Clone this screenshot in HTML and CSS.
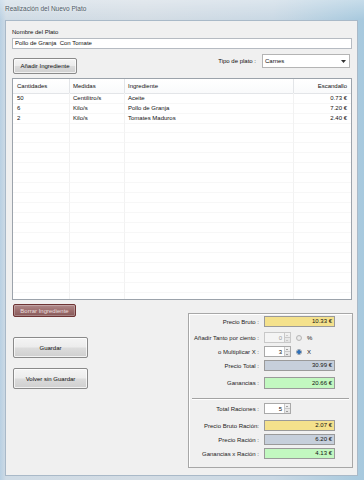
FILE: index.html
```html
<!DOCTYPE html>
<html lang="es">
<head>
  <meta charset="UTF-8">
  <title>Realización del Nuevo Plato</title>
  <link rel="stylesheet" href="styles.css">
</head>
<body>
  <div class="window">
    <div class="titlebar">Realización del Nuevo Plato</div>

    <div class="client">
      <div class="lbl">Nombre del Plato</div>
      <div class="textbox">Pollo de Granja&nbsp; Con Tomate</div>

      <div class="toolbar">
        <button class="btn btn-add">Añadir Ingrediente</button>
        <div class="tipo">
          <span>Tipo de plato :</span>
          <div class="combo">
            <span>Carnes</span>
            <svg width="5" height="3" viewBox="0 0 5 3"><path d="M0 0H5L2.5 3Z" fill="#333"/></svg>
          </div>
        </div>
      </div>

      <div class="list">
        <div class="row head">
          <div>Cantidades</div>
          <div>Medidas</div>
          <div>Ingrediente</div>
          <div class="num">Escandallo</div>
        </div>
        <div class="body">
          <div class="row"><div>50</div><div>Centilitro/s</div><div>Aceite</div><div class="num">0.73 €</div></div>
          <div class="row"><div>6</div><div>Kilo/s</div><div>Pollo de Granja</div><div class="num">7.20 €</div></div>
          <div class="row"><div>2</div><div>Kilo/s</div><div>Tomates Maduros</div><div class="num">2.40 €</div></div>
          <div class="row"><div></div><div></div><div></div><div></div></div>
          <div class="row"><div></div><div></div><div></div><div></div></div>
          <div class="row"><div></div><div></div><div></div><div></div></div>
          <div class="row"><div></div><div></div><div></div><div></div></div>
          <div class="row"><div></div><div></div><div></div><div></div></div>
          <div class="row"><div></div><div></div><div></div><div></div></div>
          <div class="row"><div></div><div></div><div></div><div></div></div>
          <div class="row"><div></div><div></div><div></div><div></div></div>
          <div class="row"><div></div><div></div><div></div><div></div></div>
          <div class="row"><div></div><div></div><div></div><div></div></div>
          <div class="row"><div></div><div></div><div></div><div></div></div>
          <div class="row"><div></div><div></div><div></div><div></div></div>
          <div class="row"><div></div><div></div><div></div><div></div></div>
          <div class="row"><div></div><div></div><div></div><div></div></div>
          <div class="row"><div></div><div></div><div></div><div></div></div>
          <div class="row"><div></div><div></div><div></div><div></div></div>
          <div class="row"><div></div><div></div><div></div><div></div></div>
          <div class="row"><div></div><div></div><div></div><div></div></div>
        </div>
      </div>

      <div class="bottom">
        <div class="actions">
          <button class="btn btn-del">Borrar Ingrediente</button>
          <button class="btn btn-big btn-save">Guardar</button>
          <button class="btn btn-big btn-back">Volver sin Guardar</button>
        </div>

        <div class="group">
          <div class="field f1">
            <span class="flabel">Precio Bruto :</span>
            <div class="value yellow">10.33 €</div>
          </div>
          <div class="field f2">
            <span class="flabel">Añadir Tanto por ciento :</span>
            <div class="spin disabled"><span>0</span><i class="arrows"></i></div>
            <span class="radio"></span>
            <span class="unit">%</span>
          </div>
          <div class="field f3">
            <span class="flabel">o Multiplicar X :</span>
            <div class="spin"><span>3</span><i class="arrows"></i></div>
            <span class="radio checked"></span>
            <span class="unit">X</span>
          </div>
          <div class="field f4">
            <span class="flabel">Precio Total :</span>
            <div class="value slate">30.99 €</div>
          </div>
          <div class="field f5">
            <span class="flabel">Ganancias :</span>
            <div class="value green">20.66 €</div>
          </div>

          <div class="sep"></div>

          <div class="field f6">
            <span class="flabel">Total Raciones :</span>
            <div class="spin"><span>5</span><i class="arrows"></i></div>
          </div>
          <div class="field f7">
            <span class="flabel">Precio Bruto Ración:</span>
            <div class="value yellow">2.07 €</div>
          </div>
          <div class="field f8">
            <span class="flabel">Precio Ración :</span>
            <div class="value slate">6.20 €</div>
          </div>
          <div class="field f9">
            <span class="flabel">Ganancias x Ración :</span>
            <div class="value green">4.13 €</div>
          </div>
        </div>
      </div>
    </div>
  </div>
</body>
</html>
```

FILE: styles.css
```css
body {
  margin: 0;
  width: 364px;
  height: 480px;
  overflow: hidden;
  font-family: 'Liberation Sans', Tahoma, sans-serif;
  font-size: 6px;
  color: #111;
  background: #dfe6ec;
}
.window {
  height: 480px;
  display: flex;
  flex-direction: column;
  background:
    linear-gradient(to bottom, rgba(255,255,255,0.35), rgba(255,255,255,0) 20px),
    linear-gradient(to right, #b9d0e3 0px, #cfdbe5 6px, #d3dce4 40%, #c9d8e4 75%, #a7c9de 100%);
}
.titlebar {
  height: 20px;
  box-sizing: border-box;
  padding: 0 0 4px 5px;
  display: flex;
  align-items: center;
  font-size: 6.5px;
  color: #4f5b66;
  text-shadow: 0 0 3px #fff;
}
.client {
  margin: 0 6px 3px 5px;
  height: 456px;
  box-sizing: border-box;
  border: 1px solid #a9b9c8;
  background: #f0f0f0;
  padding: 7px 5px 0 6px;
}
.lbl {
  height: 8px;
  line-height: 8px;
  margin-bottom: 2px;
}
.textbox {
  height: 11px;
  box-sizing: border-box;
  border: 1px solid #b6bbc2;
  background: #fff;
  line-height: 9px;
  padding-left: 2px;
}
.toolbar {
  display: flex;
  justify-content: space-between;
  align-items: flex-start;
  margin-top: 5px;
}
.btn {
  font-family: inherit;
  font-size: 6px;
  color: #111;
  padding: 0;
  border: 1px solid #8a8a8a;
  border-radius: 2px;
  background: linear-gradient(to bottom, #f4f4f4 0%, #ececec 48%, #dcdcdc 52%, #cfcfcf 100%);
  box-shadow: inset 0 0 0 1px rgba(255,255,255,0.7);
}
.btn-add {
  margin: 4px 0 0 1px;
  width: 64px;
  height: 16px;
}
.tipo {
  display: flex;
  align-items: center;
  gap: 6px;
  margin-right: 2px;
}
.combo {
  width: 88px;
  height: 14px;
  box-sizing: border-box;
  border: 1px solid #b4b4b4;
  background: #fff;
  display: flex;
  align-items: center;
  justify-content: space-between;
  padding: 0 3px 0 2px;
}
.list {
  margin-top: 4px;
  height: 222px;
  box-sizing: border-box;
  border: 1px solid #9ca3ab;
  background: #fff;
  overflow: hidden;
}
.row {
  display: grid;
  grid-template-columns: 57px 55px 169px 1fr;
  height: 10px;
  line-height: 10px;
}
.row > div {
  padding-left: 4px;
  border-right: 1px solid #f2f2f2;
  border-bottom: 1px solid #f7f7f7;
  white-space: nowrap;
}
.row > div:nth-child(2),
.row > div:nth-child(3) {
  padding-left: 3px;
}
.row > div:last-child {
  border-right: none;
}
.row .num {
  text-align: right;
  padding-right: 4px;
}
.head {
  height: 14px;
  line-height: 14px;
}
.head > div {
  border-right: 1px solid #e3e5e8;
  border-bottom: 1px solid #e3e5e8;
  background: linear-gradient(to bottom, #ffffff, #f9fafb);
}
.bottom {
  display: flex;
  justify-content: space-between;
}
.actions {
  display: flex;
  flex-direction: column;
  align-items: flex-start;
  padding-left: 1px;
}
.btn-del {
  margin-top: 4px;
  width: 63px;
  height: 13px;
  color: #e9dede;
  border-color: #6e3434;
  background: linear-gradient(to bottom, #b08a8a 0%, #9c6e6e 50%, #875959 100%);
  box-shadow: inset 0 0 0 1px rgba(255,255,255,0.25);
}
.btn-big {
  width: 75px;
  height: 21px;
}
.btn-save {
  margin-top: 20px;
}
.btn-back {
  margin-top: 10px;
}
.group {
  margin: 13px -1px 0 0;
  width: 165px;
  height: 155px;
  box-sizing: border-box;
  border: 1px solid #a7a7a7;
  box-shadow: inset 1px 1px 0 #fff;
  padding: 2px 0 0 0;
}
.field {
  display: flex;
  align-items: center;
  height: 11px;
}
.flabel {
  width: 70px;
  flex: none;
  text-align: right;
  white-space: nowrap;
  margin-right: 5px;
  color: #222;
}
.f2 { margin-top: 5px; }
.f3, .f4 { margin-top: 3px; }
.f5 { margin-top: 6px; height: 12px; }
.f6 { margin-top: 3px; }
.f7 { margin-top: 6px; }
.f8, .f9 { margin-top: 3px; }
.value {
  width: 71px;
  height: 100%;
  box-sizing: border-box;
  border: 1px solid #9a9a9a;
  text-align: right;
  padding-right: 2px;
  line-height: 9px;
}
.f5 .value { line-height: 10px; }
.yellow { background: #f4e18c; }
.slate { background: #c6cfdb; }
.green { background: #c2f8c0; }
.spin {
  width: 27px;
  height: 100%;
  box-sizing: border-box;
  border: 1px solid #a9a9a9;
  background: #fff;
  display: flex;
  justify-content: flex-end;
  align-items: center;
}
.spin span {
  padding-right: 2px;
}
.spin.disabled {
  background: #f4f4f4;
  border-color: #c8c8c8;
  color: #9a9a9a;
}
.arrows {
  width: 6px;
  height: 100%;
  box-sizing: border-box;
  border-left: 1px solid #c9c9c9;
  background:
    linear-gradient(to bottom, transparent 45%, #c9c9c9 45%, #c9c9c9 55%, transparent 55%),
    linear-gradient(to bottom, #f3f3f3, #e2e2e2);
  position: relative;
}
.arrows::before,
.arrows::after {
  content: "";
  position: absolute;
  left: 1px;
  border-left: 1.5px solid transparent;
  border-right: 1.5px solid transparent;
}
.arrows::before {
  top: 1.5px;
  border-bottom: 1.5px solid #555;
}
.arrows::after {
  bottom: 1.5px;
  border-top: 1.5px solid #555;
}
.disabled .arrows::before { border-bottom-color: #aaa; }
.disabled .arrows::after { border-top-color: #aaa; }
.radio {
  width: 6px;
  height: 6px;
  box-sizing: border-box;
  border-radius: 50%;
  border: 1px solid #b7b7b7;
  background: radial-gradient(circle, #f2f2f2, #dcdcdc);
  margin-left: 5px;
}
.radio.checked {
  border-color: #8e9aa8;
  background: radial-gradient(circle, #2d6fb9 0 1.6px, #dfe6ee 2px);
}
.unit {
  margin-left: 5px;
  color: #222;
}
.sep {
  margin: 9px 3px 0 3px;
  height: 1px;
  background: #a3a3a3;
  border-bottom: 1px solid #fff;
}
```
